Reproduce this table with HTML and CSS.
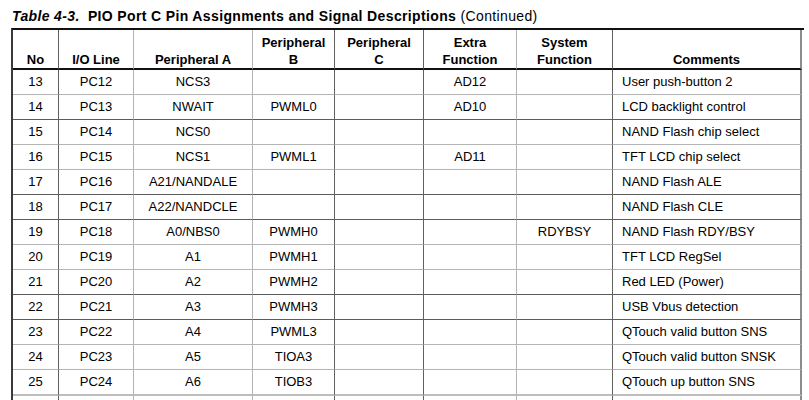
FILE: index.html
```html
<!DOCTYPE html>
<html>
<head>
<meta charset="utf-8">
<link rel="stylesheet" href="styles.css">
</head>
<body>
<div class="title"><span class="tnum">Table 4-3.</span> PIO Port C Pin Assignments and Signal Descriptions <span class="cont">(Continued)</span></div>
<div class="tbl">
  <div class="row hdr">
    <div class="c">No</div>
    <div class="c">I/O Line</div>
    <div class="c">Peripheral A</div>
    <div class="c">Peripheral<br>B</div>
    <div class="c">Peripheral<br>C</div>
    <div class="c">Extra<br>Function</div>
    <div class="c">System<br>Function</div>
    <div class="c">Comments</div>
  </div>
  <div class="row">
    <div class="c">13</div><div class="c">PC12</div><div class="c">NCS3</div><div class="c"></div><div class="c"></div><div class="c">AD12</div><div class="c"></div><div class="c">User push-button 2</div>
  </div>
  <div class="row d">
    <div class="c">14</div><div class="c">PC13</div><div class="c">NWAIT</div><div class="c">PWML0</div><div class="c"></div><div class="c">AD10</div><div class="c"></div><div class="c">LCD backlight control</div>
  </div>
  <div class="row">
    <div class="c">15</div><div class="c">PC14</div><div class="c">NCS0</div><div class="c"></div><div class="c"></div><div class="c"></div><div class="c"></div><div class="c">NAND Flash chip select</div>
  </div>
  <div class="row">
    <div class="c">16</div><div class="c">PC15</div><div class="c">NCS1</div><div class="c">PWML1</div><div class="c"></div><div class="c">AD11</div><div class="c"></div><div class="c">TFT LCD chip select</div>
  </div>
  <div class="row d">
    <div class="c">17</div><div class="c">PC16</div><div class="c">A21/NANDALE</div><div class="c"></div><div class="c"></div><div class="c"></div><div class="c"></div><div class="c">NAND Flash ALE</div>
  </div>
  <div class="row d">
    <div class="c">18</div><div class="c">PC17</div><div class="c">A22/NANDCLE</div><div class="c"></div><div class="c"></div><div class="c"></div><div class="c"></div><div class="c">NAND Flash CLE</div>
  </div>
  <div class="row">
    <div class="c">19</div><div class="c">PC18</div><div class="c">A0/NBS0</div><div class="c">PWMH0</div><div class="c"></div><div class="c"></div><div class="c">RDYBSY</div><div class="c">NAND Flash RDY/BSY</div>
  </div>
  <div class="row">
    <div class="c">20</div><div class="c">PC19</div><div class="c">A1</div><div class="c">PWMH1</div><div class="c"></div><div class="c"></div><div class="c"></div><div class="c">TFT LCD RegSel</div>
  </div>
  <div class="row d">
    <div class="c">21</div><div class="c">PC20</div><div class="c">A2</div><div class="c">PWMH2</div><div class="c"></div><div class="c"></div><div class="c"></div><div class="c">Red LED (Power)</div>
  </div>
  <div class="row d">
    <div class="c">22</div><div class="c">PC21</div><div class="c">A3</div><div class="c">PWMH3</div><div class="c"></div><div class="c"></div><div class="c"></div><div class="c">USB Vbus detection</div>
  </div>
  <div class="row">
    <div class="c">23</div><div class="c">PC22</div><div class="c">A4</div><div class="c">PWML3</div><div class="c"></div><div class="c"></div><div class="c"></div><div class="c">QTouch valid button SNS</div>
  </div>
  <div class="row">
    <div class="c">24</div><div class="c">PC23</div><div class="c">A5</div><div class="c">TIOA3</div><div class="c"></div><div class="c"></div><div class="c"></div><div class="c">QTouch valid button SNSK</div>
  </div>
  <div class="row last">
    <div class="c">25</div><div class="c">PC24</div><div class="c">A6</div><div class="c">TIOB3</div><div class="c"></div><div class="c"></div><div class="c"></div><div class="c">QTouch up button SNS</div>
  </div>
  <div class="row tail">
    <div class="c"></div><div class="c"></div><div class="c"></div><div class="c"></div><div class="c"></div><div class="c"></div><div class="c"></div><div class="c"></div>
  </div>
</div>
</body>
</html>
```
FILE: styles.css
```css
html, body {
  margin: 0;
  padding: 0;
  background: #ffffff;
}
body {
  font-family: "Liberation Sans", Arial, sans-serif;
  color: #000;
  width: 809px;
  height: 400px;
  overflow: hidden;
}
.title {
  font-size: 14px;
  font-weight: bold;
  line-height: 16px;
  letter-spacing: 0.36px;
  padding: 8px 0 4px 12px;
  white-space: nowrap;
}
.tnum {
  font-style: italic;
  margin-right: 4px;
}
.cont {
  font-weight: normal;
}
.tbl {
  margin-left: 11px;
  width: 791px;
  display: grid;
  grid-template-columns: 46px 75px 119px 82px 89px 93px 96px 189px;
  border-left: 2px solid #3a3a3a;
  border-top: 2px solid #111;
  font-size: 13px;
}
.row {
  display: contents;
}
.c {
  box-sizing: border-box;
  height: 25px;
  line-height: 24px;
  text-align: center;
  white-space: nowrap;
  border-right: 1px solid #b4b4b4;
  border-bottom: 1px solid #b4b4b4;
}
.c:nth-child(1),
.c:nth-child(4),
.c:nth-child(5),
.c:nth-child(7) {
  border-right-color: #606060;
}
.c:nth-child(8) {
  border-right: 2px solid #8c8c8c;
  text-align: left;
  padding-left: 9px;
}
.row.d > .c {
  border-bottom-color: #5c5c5c;
}
.row.last > .c {
  border-bottom: 2px solid #bdbdbd;
  height: 26px;
}
.row.tail > .c {
  height: 4px;
  border-bottom: 0;
}
.hdr > .c {
  height: 40px;
  line-height: 17px;
  font-weight: bold;
  border-bottom: 2px solid #111;
  display: flex;
  flex-direction: column;
  justify-content: flex-end;
  align-items: center;
}
.hdr > .c:nth-child(8) {
  text-align: center;
  padding-left: 0;
}
```
